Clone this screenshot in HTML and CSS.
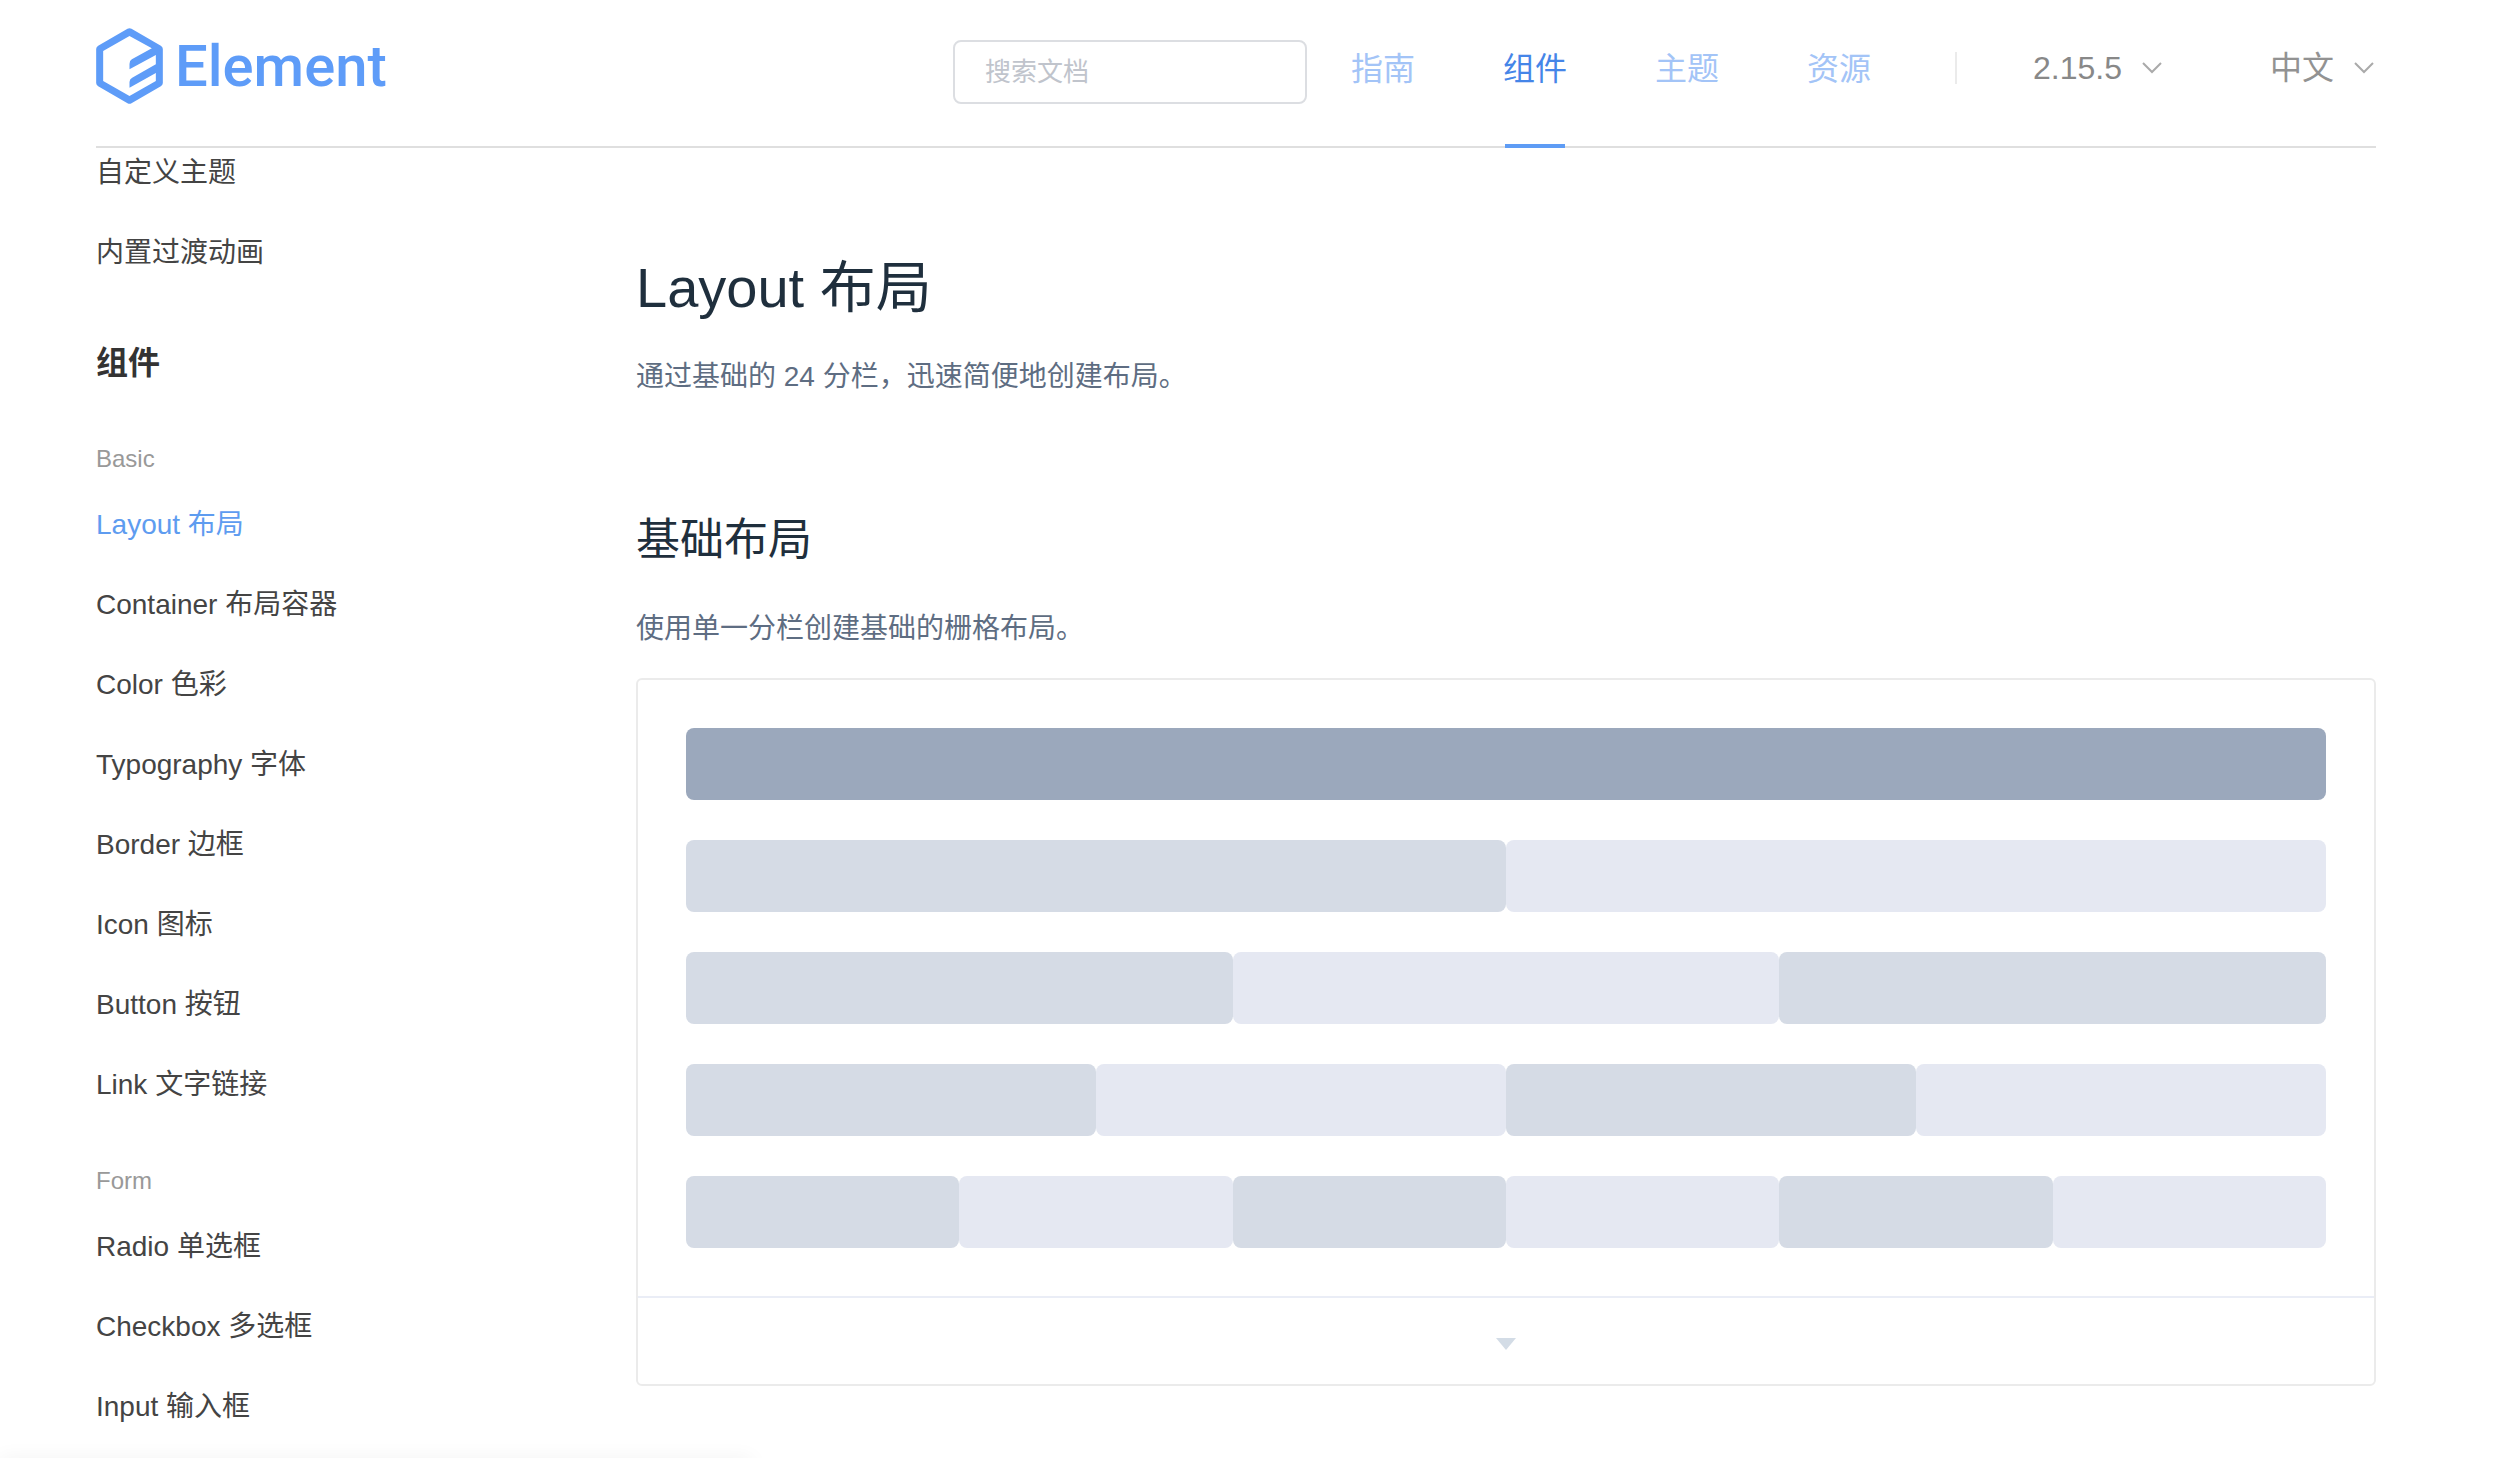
FILE: index.html
```html
<!DOCTYPE html>
<html lang="zh-CN">
<head>
<meta charset="utf-8">
<title>Layout 布局 - Element</title>
<link rel="stylesheet" href="styles.css">
</head>
<body>
<header class="header">
  <a class="logo" href="#">
    <svg class="logo-mark" viewBox="0 0 200 228" aria-hidden="true">
      <path fill="currentColor" fill-rule="evenodd" d="M94 2Q100-1 106 2L194 53Q200 57 200 63V165Q200 171 194 175L106 226Q100 229 94 226L6 175Q0 171 0 165V63Q0 57 6 53ZM100 24L21 69V159L100 204L179 159V135L100 179V162Q100 153 108 149L179 109V81L100 124V108Q100 98 107 94L167 61Z"/>
    </svg>
    <span class="logo-text">Element</span>
  </a>
  <input class="search" type="text" placeholder="搜索文档" aria-label="搜索文档">
  <nav class="nav">
    <a class="nav-item" href="#">指南</a>
    <a class="nav-item active" href="#">组件</a>
    <a class="nav-item" href="#">主题</a>
    <a class="nav-item" href="#">资源</a>
  </nav>
  <button class="dropdown version" type="button">2.15.5
    <svg class="arrow" viewBox="0 0 24 24" aria-hidden="true"><path d="M3 7L12 16L21 7"/></svg>
  </button>
  <button class="dropdown" type="button">中文
    <svg class="arrow" viewBox="0 0 24 24" aria-hidden="true"><path d="M3 7L12 16L21 7"/></svg>
  </button>
</header>
<div class="main">
  <aside class="sidebar">
    <ul class="menu">
      <li><a href="#">自定义主题</a></li>
      <li><a href="#">内置过渡动画</a></li>
    </ul>
    <h2 class="menu-heading">组件</h2>
    <h3 class="group-title">Basic</h3>
    <ul class="menu">
      <li><a class="current" href="#">Layout 布局</a></li>
      <li><a href="#">Container 布局容器</a></li>
      <li><a href="#">Color 色彩</a></li>
      <li><a href="#">Typography 字体</a></li>
      <li><a href="#">Border 边框</a></li>
      <li><a href="#">Icon 图标</a></li>
      <li><a href="#">Button 按钮</a></li>
      <li><a href="#">Link 文字链接</a></li>
    </ul>
    <h3 class="group-title">Form</h3>
    <ul class="menu">
      <li><a href="#">Radio 单选框</a></li>
      <li><a href="#">Checkbox 多选框</a></li>
      <li><a href="#">Input 输入框</a></li>
    </ul>
  </aside>
  <main class="content">
    <h1 class="title">Layout 布局</h1>
    <p class="text">通过基础的 24 分栏，迅速简便地创建布局。</p>
    <h2 class="subtitle">基础布局</h2>
    <p class="text">使用单一分栏创建基础的栅格布局。</p>
    <section class="demo">
      <div class="demo-rows">
        <div class="row"><div class="col dark"></div></div>
        <div class="row"><div class="col"></div><div class="col"></div></div>
        <div class="row"><div class="col"></div><div class="col"></div><div class="col"></div></div>
        <div class="row"><div class="col"></div><div class="col"></div><div class="col"></div><div class="col"></div></div>
        <div class="row"><div class="col"></div><div class="col"></div><div class="col"></div><div class="col"></div><div class="col"></div><div class="col"></div></div>
      </div>
      <button class="demo-toggle" type="button" aria-label="显示代码">
        <svg class="caret" viewBox="0 0 20 12" aria-hidden="true"><path d="M0 0H20L10 12Z"/></svg>
      </button>
    </section>
  </main>
</div>
<div class="bottom-shade"></div>
</body>
</html>
```
FILE: styles.css
```css
* {
  box-sizing: border-box;
}

body {
  margin: 0;
  height: 100vh;
  overflow: hidden;
  background: #fff;
  color: #444;
  font-family: "Liberation Sans", "Noto Sans CJK SC", sans-serif;
  font-size: 28px;
}

a {
  color: inherit;
  text-decoration: none;
}

h1, h2, h3, p, ul {
  margin: 0;
  padding: 0;
  font-weight: 400;
}

ul {
  list-style: none;
}

button {
  margin: 0;
  padding: 0;
  border: 0;
  background: none;
  font: inherit;
}

/* Header */
.header {
  position: relative;
  z-index: 1;
  display: flex;
  height: 148px;
  margin: 0 132px 0 96px;
  padding-bottom: 10px;
  align-items: center;
  border-bottom: 2px solid #dfdfdf;
  background: #fff;
  font-size: 32px;
}

.logo {
  display: flex;
  align-items: center;
  gap: 12px;
  margin-right: auto;
  padding-bottom: 4px;
  color: #5e9cf8;
}

.logo-mark {
  width: 67px;
  height: 76px;
}

.logo-text {
  font-family: Roboto, sans-serif;
  font-size: 58px;
  font-weight: 500;
  line-height: 64px;
}

.search {
  width: 354px;
  height: 64px;
  margin-top: 8px;
  padding: 0 30px;
  border: 2px solid #dcdee2;
  border-radius: 8px;
  background: #fff;
  font: inherit;
  font-size: 26px;
}

.search::placeholder {
  color: #c0c4cc;
  opacity: 1;
}

.nav {
  display: flex;
  align-self: stretch;
  margin-bottom: -12px;
}

.nav-item {
  position: relative;
  padding: 0 44px;
  color: #a3c4f7;
  line-height: 138px;
}

.nav-item.active {
  color: #4585e8;
}

.nav-item.active::after {
  content: "";
  position: absolute;
  right: 46px;
  bottom: 0;
  left: 46px;
  height: 4px;
  background: #5e9cf5;
}

.dropdown {
  display: flex;
  align-items: center;
  gap: 18px;
  margin-left: 106px;
  color: #929292;
  line-height: 32px;
}

.dropdown.version {
  margin-left: 40px;
  padding-left: 76px;
  border-left: 2px solid #ebebeb;
  color: #888;
}

.arrow {
  width: 24px;
  height: 24px;
  fill: none;
  stroke: #aaa;
  stroke-width: 2;
}

/* Page body */
.main {
  display: flex;
  margin: 0 132px 0 96px;
}

.sidebar {
  flex: 0 0 540px;
  margin-top: -15px;
}

.menu a {
  display: block;
  line-height: 80px;
}

.menu .current {
  color: #5e9cf0;
}

.menu-heading {
  margin-top: 30px;
  color: #333;
  font-size: 32px;
  font-weight: 700;
  line-height: 80px;
}

.group-title {
  margin-top: 30px;
  color: #999;
  font-size: 24px;
  line-height: 52px;
}

.content {
  flex: 1;
  padding-top: 98px;
}

.title {
  color: #1f2f3d;
  font-size: 56px;
  line-height: 84px;
}

.text {
  margin-top: 22px;
  color: #5e6d82;
  font-size: 28px;
  line-height: 50px;
}

.subtitle {
  margin-top: 112px;
  color: #1f2f3d;
  font-size: 44px;
  line-height: 52px;
}

.subtitle + .text {
  margin-top: 38px;
}

/* Grid demo */
.demo {
  margin-top: 24px;
  border: 2px solid #ebebeb;
  border-radius: 6px;
}

.demo-rows {
  display: grid;
  gap: 40px;
  padding: 48px;
}

.row {
  display: flex;
}

.col {
  flex: 1;
  height: 72px;
  border-radius: 8px;
  background: #d5dbe5;
}

.col:nth-child(even) {
  background: #e5e8f2;
}

.col.dark {
  background: #9ba8bc;
}

.demo-toggle {
  display: flex;
  width: 100%;
  height: 88px;
  padding-top: 6px;
  align-items: center;
  justify-content: center;
  border-top: 2px solid #eaedf6;
}

.caret {
  width: 20px;
  height: 12px;
  fill: #d3dce6;
}

/* Faint shade along the bottom-left edge of the window */
.bottom-shade {
  position: fixed;
  bottom: -12px;
  left: 0;
  width: 30%;
  height: 10px;
  box-shadow: 0 0 20px rgba(0, 0, 0, 0.08);
}
```
